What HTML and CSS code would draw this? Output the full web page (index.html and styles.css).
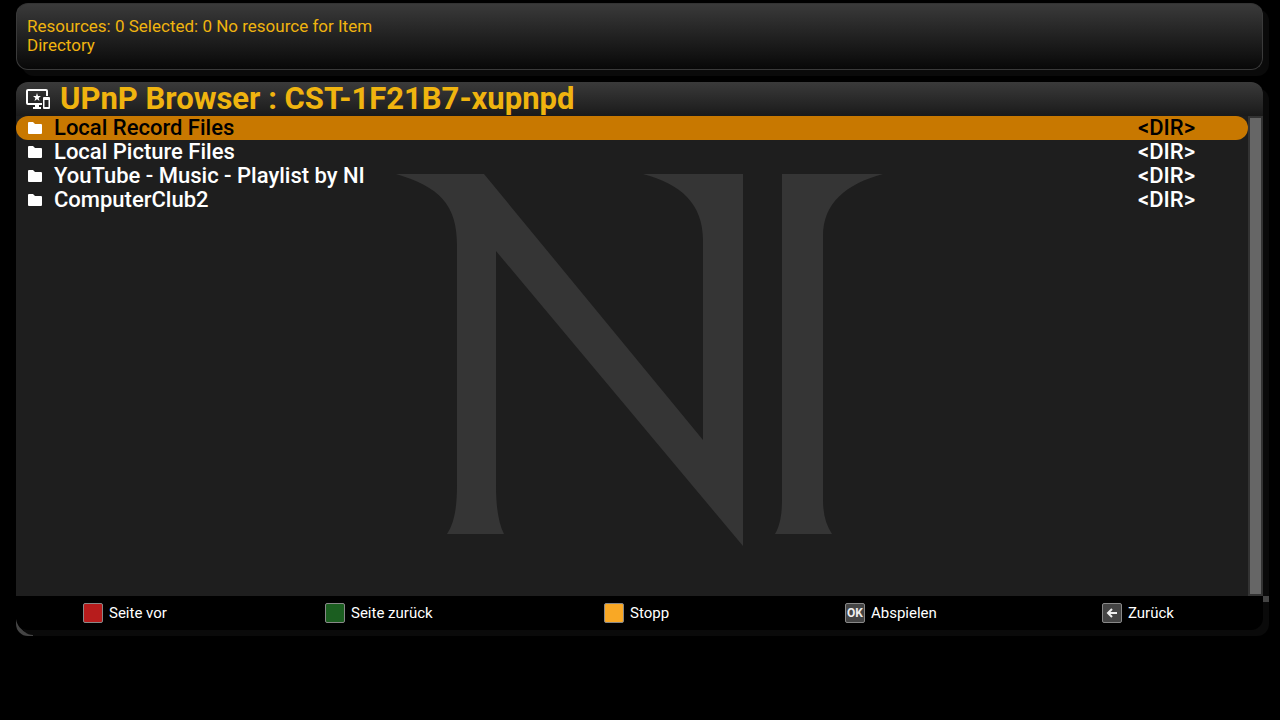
FILE: index.html
```html
<!DOCTYPE html>
<html lang="de">
<head>
  <meta charset="UTF-8">
  <meta name="viewport" content="width=device-width, initial-scale=1.0">
  <title>UPnP Browser</title>
  <link rel="stylesheet" href="styles.css">
</head>
<body>
  <div class="info-box">
    <p>Resources: 0 Selected: 0 No resource for Item</p>
    <p>Directory</p>
  </div>

  <main class="window">
    <div class="header">
      <svg class="header-icon" width="24" height="22" viewBox="0 0 24 22" aria-hidden="true">
        <path fill="#fff" d="M2 1h18a2 2 0 0 1 2 2v5h-2V3H2v12h14v2h-3v2h2v2H7v-2h2v-2H2a2 2 0 0 1-2-2V3a2 2 0 0 1 2-2z"/>
        <path fill="#fff" d="M11 5l1 3h3l-2.400 1.900.9 3.100-2.500-1.800L8.500 13l.9-3.100L7 8h3z"/>
        <path fill="#fff" fill-rule="evenodd" d="M18 9h5a1 1 0 0 1 1 1v10a1 1 0 0 1-1 1h-5a1 1 0 0 1-1-1V10a1 1 0 0 1 1-1zm.5 3v7h4v-7z"/>
      </svg>
      <h1>UPnP Browser : CST-1F21B7-xupnpd</h1>
    </div>

    <div class="content">
      <!-- NI logo -->
      <svg class="logo" width="490" height="376" viewBox="395 168 490 380" aria-hidden="true">
        <path d="M396 174H484L703 440V240C703 204 681 184 643 174H743V546L496 251V485C496 505 498 522 504 534H447C455 522 457 505 457 485V245C457 204 439 187 396 174z"/>
        <path d="M782 174H883C846 184 823 203 823 236V500C823 514 826 525 832 534H775C780 526 782 514 782 500z"/>
      </svg>

      <table class="file-list">
        <tbody>
          <tr class="selected">
            <td class="icon"><svg width="14" height="12" viewBox="0 0 14 12"><path d="M1 0h4l2 2h6a1 1 0 0 1 1 1v8a1 1 0 0 1-1 1H1a1 1 0 0 1-1-1V1a1 1 0 0 1 1-1z"/></svg></td>
            <td><a href="#record">Local Record Files</a></td>
            <td class="type">&lt;DIR&gt;</td>
          </tr>
          <tr>
            <td class="icon"><svg width="14" height="12" viewBox="0 0 14 12"><path d="M1 0h4l2 2h6a1 1 0 0 1 1 1v8a1 1 0 0 1-1 1H1a1 1 0 0 1-1-1V1a1 1 0 0 1 1-1z"/></svg></td>
            <td><a href="#picture">Local Picture Files</a></td>
            <td class="type">&lt;DIR&gt;</td>
          </tr>
          <tr>
            <td class="icon"><svg width="14" height="12" viewBox="0 0 14 12"><path d="M1 0h4l2 2h6a1 1 0 0 1 1 1v8a1 1 0 0 1-1 1H1a1 1 0 0 1-1-1V1a1 1 0 0 1 1-1z"/></svg></td>
            <td><a href="#youtube">YouTube - Music - Playlist by NI</a></td>
            <td class="type">&lt;DIR&gt;</td>
          </tr>
          <tr>
            <td class="icon"><svg width="14" height="12" viewBox="0 0 14 12"><path d="M1 0h4l2 2h6a1 1 0 0 1 1 1v8a1 1 0 0 1-1 1H1a1 1 0 0 1-1-1V1a1 1 0 0 1 1-1z"/></svg></td>
            <td><a href="#computerclub">ComputerClub2</a></td>
            <td class="type">&lt;DIR&gt;</td>
          </tr>
        </tbody>
      </table>
      <div class="scrollbar"></div>
    </div>

    <div class="footer">
      <button><span class="key red"></span>Seite vor</button>
      <button><span class="key green"></span>Seite zurück</button>
      <button><span class="key yellow"></span>Stopp</button>
      <button><span class="key">OK</span>Abspielen</button>
      <button><span class="key"><svg width="12" height="10" viewBox="0 0 12 10"><path d="M11 5H2M6 1L2 5l4 4" fill="none" stroke="#eee" stroke-width="2"/></svg></span>Zurück</button>
    </div>

    <svg class="corner" width="18" height="18" viewBox="0 0 18 18" aria-hidden="true">
      <path d="M0 1C1 8 6 12 9 14Q12 17 17 17V18H12A12 12 0 0 1 0 6z" fill="#444"/>
    </svg>
    <span class="notch"></span>
  </main>
</body>
</html>
```
FILE: styles.css
```css
* {
  box-sizing: border-box;
}

body {
  min-height: 100vh;
  margin: 0;
  padding: 3px 17px 0 16px;
  background: #000;
  color: #fff;
  font-family: Roboto, sans-serif;
}

.info-box {
  min-height: 67px;
  padding: 13px 10px;
  border: 1px solid #3a3a3a;
  border-top-color: #333;
  border-radius: 12px;
  background: linear-gradient(#3a3a3a, #080808);
  box-shadow: 6px 6px 0 #0a0a0a;
  color: #f0b40f;
  font-size: 17px;
  line-height: 19px;
}

.info-box p {
  margin: 0;
}

.window {
  position: relative;
  margin-top: 12px;
  border-radius: 12px;
  background: #000;
  box-shadow: 6px 6px 0 #0a0a0a;
}

.header {
  display: flex;
  align-items: center;
  gap: 10px;
  height: 34px;
  padding: 0 10px;
  border-radius: 12px 12px 0 0;
  background: linear-gradient(#3a3a3a, #1a1a1a);
}

.header h1 {
  margin: 0;
  color: #f0b40f;
  font-size: 31px;
  font-weight: 700;
  line-height: 34px;
}

.content {
  position: relative;
  display: flex;
  align-items: stretch;
  min-height: 480px;
  background: #1e1e1e;
}

/* watermark behind the list */
.logo {
  position: absolute;
  top: 52px;
  left: 50%;
  width: 490px;
  height: 380px;
  transform: translateX(-50%);
  fill: #353535;
}

.file-list {
  position: relative;
  flex: 1;
  align-self: flex-start;
  border-collapse: collapse;
  font-size: 22px;
  font-weight: 500;
  line-height: 24px;
}

.file-list td {
  height: 24px;
  padding: 0;
}

.file-list a {
  color: inherit;
  text-decoration: none;
}

.file-list .icon {
  width: 38px;
  padding-left: 12px;
  line-height: 0;
}

.file-list .icon svg {
  fill: #fff;
}

.file-list .type {
  width: 110px;
}

.selected td {
  background: #c87800;
  color: #000;
}

.selected td:first-child {
  border-radius: 12px 0 0 12px;
}

.selected td:last-child {
  border-radius: 0 12px 12px 0;
}

.scrollbar {
  position: relative;
  width: 15px;
  border: 2px solid #333;
  background: #666;
}

.footer {
  display: grid;
  grid-template-columns: 242fr 279fr 241fr 257fr 161fr;
  align-items: center;
  height: 34px;
  padding-left: 67px;
}

.footer button {
  display: flex;
  align-items: center;
  gap: 6px;
  padding: 0;
  border: none;
  background: none;
  color: #fff;
  font-family: inherit;
  font-size: 15px;
  line-height: 20px;
}

.key {
  display: flex;
  align-items: center;
  justify-content: center;
  width: 20px;
  height: 20px;
  border: 1px solid #888;
  border-radius: 2px;
  background: #444;
  color: #eee;
  font-size: 12px;
  font-weight: 700;
}

.key.red {
  background: #b71c1c;
}

.key.green {
  background: #1b5e20;
}

.key.yellow {
  background: #f9a825;
}

.corner {
  position: absolute;
  left: 0;
  bottom: -6px;
}

.notch {
  position: absolute;
  right: -6px;
  bottom: 28px;
  width: 6px;
  height: 6px;
  background: #444;
}
```
